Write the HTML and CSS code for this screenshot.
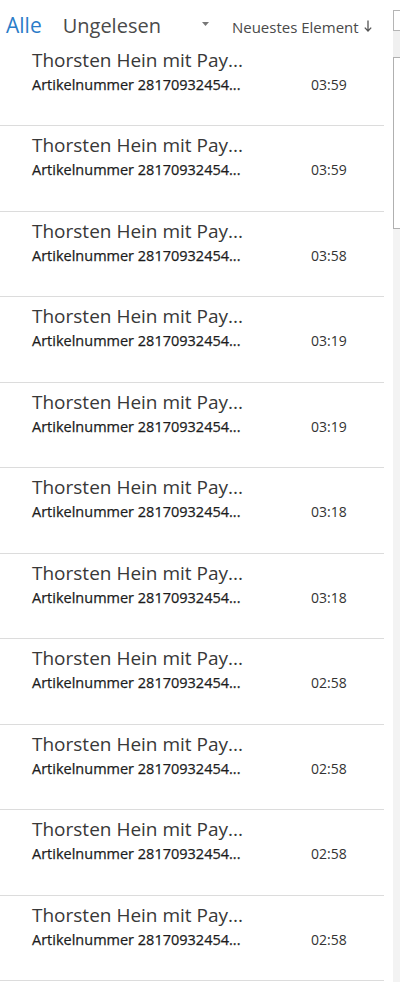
FILE: index.html
```html
<!DOCTYPE html>
<html lang="de">
<head>
<meta charset="utf-8">
<link rel="stylesheet" href="styles.css">
</head>
<body>
<div class="app">
  <div class="pane">
    <div class="header">
      <span class="tab active">Alle</span>
      <span class="tab">Ungelesen</span>
      <svg class="caret" width="7" height="4" viewBox="0 0 7 4"><polygon points="0,0 7,0 3.5,4" fill="#777"/></svg>
      <span class="sort">Neuestes Element</span>
      <svg class="arrow" width="8" height="12" viewBox="0 0 8 12"><path d="M4 0.5 V11 M0.8 7.6 L4 11 L7.2 7.6" fill="none" stroke="#555" stroke-width="1.3"/></svg>
    </div>
    <div class="list">
      <div class="row"><div class="name">Thorsten Hein mit Pay...</div><div class="line2"><span class="subj">Artikelnummer 28170932454...</span><span class="time">03:59</span></div></div>
      <div class="row"><div class="name">Thorsten Hein mit Pay...</div><div class="line2"><span class="subj">Artikelnummer 28170932454...</span><span class="time">03:59</span></div></div>
      <div class="row"><div class="name">Thorsten Hein mit Pay...</div><div class="line2"><span class="subj">Artikelnummer 28170932454...</span><span class="time">03:58</span></div></div>
      <div class="row"><div class="name">Thorsten Hein mit Pay...</div><div class="line2"><span class="subj">Artikelnummer 28170932454...</span><span class="time">03:19</span></div></div>
      <div class="row"><div class="name">Thorsten Hein mit Pay...</div><div class="line2"><span class="subj">Artikelnummer 28170932454...</span><span class="time">03:19</span></div></div>
      <div class="row"><div class="name">Thorsten Hein mit Pay...</div><div class="line2"><span class="subj">Artikelnummer 28170932454...</span><span class="time">03:18</span></div></div>
      <div class="row"><div class="name">Thorsten Hein mit Pay...</div><div class="line2"><span class="subj">Artikelnummer 28170932454...</span><span class="time">03:18</span></div></div>
      <div class="row"><div class="name">Thorsten Hein mit Pay...</div><div class="line2"><span class="subj">Artikelnummer 28170932454...</span><span class="time">02:58</span></div></div>
      <div class="row"><div class="name">Thorsten Hein mit Pay...</div><div class="line2"><span class="subj">Artikelnummer 28170932454...</span><span class="time">02:58</span></div></div>
      <div class="row"><div class="name">Thorsten Hein mit Pay...</div><div class="line2"><span class="subj">Artikelnummer 28170932454...</span><span class="time">02:58</span></div></div>
      <div class="row"><div class="name">Thorsten Hein mit Pay...</div><div class="line2"><span class="subj">Artikelnummer 28170932454...</span><span class="time">02:58</span></div></div>
    </div>
  </div>
  <div class="scroll">
    <div class="sbtn"></div>
    <div class="sgap"></div>
    <div class="thumb"></div>
    <div class="track"></div>
  </div>
</div>
</body>
</html>
```
FILE: styles.css
```css
html, body {
  margin: 0;
  padding: 0;
  background: #ffffff;
}
body {
  font-family: "Open Sans", "Noto Sans", sans-serif;
  color: #333333;
  width: 400px;
  height: 982px;
  overflow: hidden;
}
.app {
  display: flex;
  height: 982px;
}
.pane {
  width: 384px;
  flex: none;
}
.header {
  height: 40.5px;
  box-sizing: border-box;
  display: flex;
  align-items: baseline;
  padding-left: 6px;
  padding-top: 13px;
  white-space: nowrap;
}
.tab {
  font-size: 20px;
  line-height: 24px;
  color: #4a4a4a;
}
.tab.active {
  font-size: 21px;
  color: #2b7cc8;
  margin-right: 21px;
}
.caret {
  margin-left: 41px;
  margin-right: 23px;
  align-self: flex-start;
  margin-top: 9px;
}
.sort {
  font-size: 15px;
  color: #4a4a4a;
}
.arrow {
  margin-left: 5px;
  align-self: flex-start;
  margin-top: 7px;
}
.row {
  height: 85.5px;
  box-sizing: border-box;
  border-bottom: 1px solid #dcdcdc;
  padding-left: 32px;
  padding-top: 7px;
}
.name {
  font-size: 19px;
  color: #383838;
  line-height: 24px;
  white-space: nowrap;
}
.line2 {
  display: flex;
  margin-top: 5px;
  font-size: 14.5px;
  line-height: 16px;
  color: #1c1c1c;
  white-space: nowrap;
}
.subj {
  width: 279px;
  font-weight: 400;
  -webkit-text-stroke: 0.25px #1c1c1c;
}
.time {
  font-size: 14px;
  color: #333333;
}
.scroll {
  margin-left: 9px;
  width: 7px;
  display: flex;
  flex-direction: column;
  padding-top: 10px;
}
.sbtn {
  height: 19px;
  border: 1px solid #b5b5b5;
  border-right: none;
  background: #ffffff;
}
.sgap {
  height: 26px;
  background: #f0f0f0;
}
.thumb {
  height: 170px;
  border: 1px solid #b0b0b0;
  border-right: none;
  background: #ffffff;
}
.track {
  flex: 1;
  background: #f3f3f3;
}
```
